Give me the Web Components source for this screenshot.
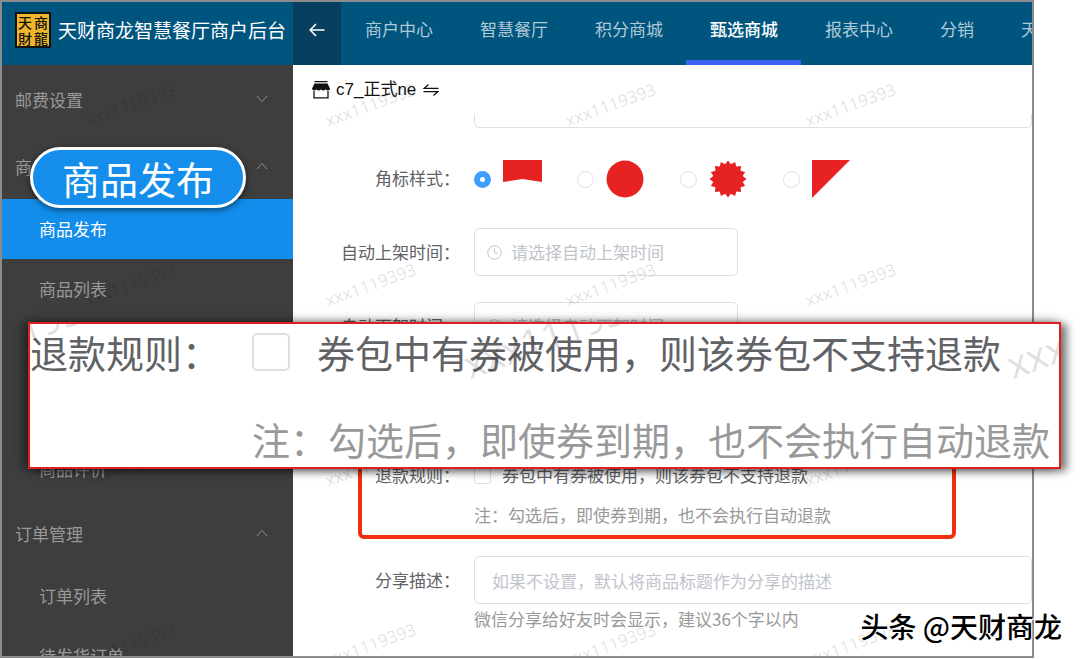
<!DOCTYPE html>
<html lang="zh-CN">
<head>
<meta charset="utf-8">
<title>天财商龙智慧餐厅商户后台</title>
<style>
    * { box-sizing: border-box; }
    html, body { height: 100%; margin: 0; }
    body {
        position: relative;
        overflow: hidden;
        background: #fff;
        color: #606266;
        font-family: "Noto Sans CJK SC", sans-serif;
        font-size: 17px;
        line-height: 24px;
    }
</style>
</head>
<body>
<app-shell>
    <app-brand slot="header"></app-brand>
    <top-nav slot="header"></top-nav>
    <side-menu slot="side"></side-menu>
    <shop-bar slot="main" name="c7_正式ne"></shop-bar>
    <goods-form slot="main"></goods-form>
    <water-mark slot="overlay" text="xxx1119393" count="16"></water-mark>
</app-shell>
<pill-callout>商品发布</pill-callout>
<rule-callout></rule-callout>
<author-credit>头条 @天财商龙</author-credit>

<script>
// shared helper: open shadow root with own markup
function render(el, html) {
    const root = el.shadowRoot || el.attachShadow({ mode: "open" });
    root.innerHTML = "<style>*{box-sizing:border-box}</style>" + html;
    return root;
}

class AppShell extends HTMLElement {
    connectedCallback() {
        render(this, `
            <style>
                :host {
                    display: flex;
                    flex-direction: column;
                    position: relative;
                    height: calc(100% - 1px);
                    margin-right: 46px;
                    border: 2px solid #8c8c8c;
                    overflow: hidden;
                }
                header { display: flex; flex: none; height: 63px; background: #00557f; }
                .body { display: flex; flex: 1; min-height: 0; }
                aside { flex: none; width: 291px; background: #3e3e3e; overflow: hidden; }
                main { display: flex; flex-direction: column; flex: 1; min-width: 0; }
            </style>
            <header><slot name="header"></slot></header>
            <div class="body">
                <aside><slot name="side"></slot></aside>
                <main><slot name="main"></slot></main>
            </div>
            <slot name="overlay"></slot>
        `);
    }
}
customElements.define("app-shell", AppShell);

class AppBrand extends HTMLElement {
    connectedCallback() {
        render(this, `
            <style>
                :host {
                    display: flex;
                    align-items: center;
                    flex: none;
                    gap: 7px;
                    width: 291px;
                    padding: 0 0 8px 13px;
                    color: #fff;
                    font-size: 19px;
                    white-space: nowrap;
                }
                .logo {
                    display: grid;
                    grid-template-columns: 16px 16px;
                    grid-template-rows: 16px 16px;
                    place-items: center;
                    flex: none;
                    border: 2px solid #111;
                    background: #f0b62c;
                    color: #111;
                    font-size: 14px;
                    font-weight: 500;
                    line-height: 14px;
                }
            </style>
            <div class="logo"><span>天</span><span>商</span><span>財</span><span>龍</span></div>
            <span>天财商龙智慧餐厅商户后台</span>
        `);
    }
}
customElements.define("app-brand", AppBrand);

class TopNav extends HTMLElement {
    connectedCallback() {
        const tabs = ["商户中心", "智慧餐厅", "积分商城", "甄选商城", "报表中心", "分销", "天财"];
        const links = tabs.map(t => `<a href="#"${t === "甄选商城" ? ' class="active"' : ""}>${t}</a>`).join("");
        render(this, `
            <style>
                :host { display: flex; flex: 1; min-width: 0; overflow: hidden; }
                button {
                    display: flex;
                    align-items: center;
                    justify-content: center;
                    flex: none;
                    width: 48px;
                    padding: 0 0 8px;
                    border: 0;
                    background: #073f5e;
                }
                nav { display: flex; }
                a {
                    display: flex;
                    align-items: center;
                    flex: none;
                    padding: 0 23px 4px 24px;
                    border-bottom: 5px solid transparent;
                    color: #b0c9d6;
                    text-decoration: none;
                    white-space: nowrap;
                }
                a.active { border-color: #3b64f2; color: #fff; font-weight: 500; }
            </style>
            <button aria-label="返回">
                <svg width="18" height="16" viewBox="0 0 18 16" fill="none" stroke="#fff" stroke-width="1.600"><path d="M16.500 8H2.500M8 2L2.200 8L8 14"/></svg>
            </button>
            <nav>${links}</nav>
        `);
    }
}
customElements.define("top-nav", TopNav);

class SideMenu extends HTMLElement {
    connectedCallback() {
        const group = (name, open) => `
            <button class="group"><span>${name}</span>
                <svg width="12" height="8" viewBox="0 0 12 8" fill="none" stroke="#8f8f8f"><path d="${open ? "M1 7L6 1.500L11 7" : "M1 1L6 6.500L11 1"}"/></svg>
            </button>`;
        render(this, `
            <style>
                :host { display: flex; flex-direction: column; color: #999; }
                .group {
                    display: flex;
                    align-items: center;
                    justify-content: space-between;
                    flex: none;
                    height: 67px;
                    padding: 0 25px 0 13px;
                    border: 0;
                    background: none;
                    color: inherit;
                    font: inherit;
                }
                .group span { padding-top: 3px; }
                a {
                    display: flex;
                    align-items: center;
                    flex: none;
                    height: 60px;
                    padding-left: 37px;
                    color: inherit;
                    text-decoration: none;
                }
                a.active { background: #128deb; color: #fff; }
                .rest { flex: none; height: 120px; }
            </style>
            ${group("邮费设置", false)}
            ${group("商品管理", true)}
            <a href="#" class="active">商品发布</a>
            <a href="#">商品列表</a>
            <div class="rest"></div>
            <a href="#">商品评价</a>
            ${group("订单管理", true)}
            <a href="#">订单列表</a>
            <a href="#">待发货订单</a>
        `);
    }
}
customElements.define("side-menu", SideMenu);

class ShopBar extends HTMLElement {
    connectedCallback() {
        render(this, `
            <style>
                :host {
                    display: flex;
                    align-items: center;
                    flex: none;
                    gap: 6px;
                    height: 49px;
                    padding-left: 19px;
                    color: #111;
                    font-family: "Liberation Sans", "Noto Sans CJK SC", sans-serif;
                }
                button { display: flex; padding: 0; border: 0; background: none; }
                .swap { padding-left: 1px; }
            </style>
            <svg width="18" height="18" viewBox="0 0 18 18">
                <path fill="#111" d="M2.500 0h13v1.200h-13zM2.500 2.500h13L18 7.500q0 2-1.800 2T13.500 8.200q-.8 1.300-2.300 1.300T9 8.200q-.8 1.300-2.300 1.300T4.500 8.200q-.8 1.300-2.500 1.300T0 7.500z"/>
                <path fill="none" stroke="#111" stroke-width="1.300" d="M2 10v6.800h14V10"/>
            </svg>
            <span>${this.getAttribute("name")}</span>
            <button class="swap" aria-label="切换门店">
                <svg width="16" height="12" viewBox="0 0 16 12" fill="none" stroke="#111" stroke-width="1.300"><path d="M15.500 4.300H1.200L5.500 .600M.500 7.700H14.800L10.500 11.400"/></svg>
            </button>
        `);
    }
}
customElements.define("shop-bar", ShopBar);

class FormRow extends HTMLElement {
    connectedCallback() {
        render(this, `
            <style>
                :host { display: flex; position: relative; }
                .label {
                    flex: none;
                    width: 167px;
                    line-height: 48px;
                    text-align: right;
                    white-space: nowrap;
                }
                .content { flex: 1; min-width: 0; margin-left: 14px; }
            </style>
            <div class="label"><slot name="label"></slot></div>
            <div class="content"><slot></slot></div>
        `);
    }
}
customElements.define("form-row", FormRow);

class GoodsForm extends HTMLElement {
    connectedCallback() {
        // 16 point star badge
        const star = Array.from({ length: 32 }, (_, i) => {
            const r = i % 2 ? 15 : 18.5;
            const a = i * Math.PI / 16;
            return (19 + r * Math.sin(a)).toFixed(1) + "," + (19 - r * Math.cos(a)).toFixed(1);
        }).join(" ");
        const shapes = [
            ["旗帜", '<path d="M0 0H39V22L19.500 19L0 22z"/>'],
            ["圆形", '<circle cx="19" cy="19" r="18.500"/>'],
            ["星形", `<polygon points="${star}"/>`],
            ["三角", '<path d="M0 0H38L0 38z"/>']
        ];
        const radios = shapes.map(([name, svg], i) => `
            <label><input type="radio" name="badge" aria-label="${name}"${i ? "" : " checked"}>
                <svg width="39" height="38" viewBox="0 0 39 38" fill="#e62222">${svg}</svg></label>`).join("");
        const time = (id, ph) => `
            <div class="time">
                <svg width="15" height="15" viewBox="0 0 15 15" fill="none" stroke="#c0c4cc"><circle cx="7.500" cy="7.500" r="6.800"/><path d="M7.500 3.500V8H11"/></svg>
                <input id="${id}" type="text" placeholder="${ph}">
            </div>`;
        render(this, `
            <style>
                :host {
                    display: flex;
                    flex-direction: column;
                    justify-content: flex-start;
                    gap: 26px;
                    flex: 1;
                    min-height: 0;
                    overflow: hidden;
                }
                form-row { flex: none; }
                input, textarea { margin: 0; font: inherit; color: inherit; outline: 0; }
                ::placeholder { color: #c0c4cc; opacity: 1; }
                .tail { height: 14px; overflow: hidden; display: flex; align-items: flex-end; }
                .tail textarea {
                    display: block;
                    flex: 1;
                    height: 96px;
                    border: 1px solid #dcdfe6;
                    border-radius: 5px;
                    resize: none;
                }
                .badges { display: flex; gap: 35px; padding-top: 6px; }
                .badges label { display: flex; align-items: center; gap: 12px; width: 68px; }
                .badges label svg { flex: none; }
                input[type=radio], input[type=checkbox] {
                    appearance: none;
                    flex: none;
                    width: 17px;
                    height: 17px;
                    border: 1px solid #dcdfe6;
                    border-radius: 50%;
                    background: #fff;
                }
                input[type=radio]:checked { border: 6px solid #409eff; }
                input[type=checkbox] { border-radius: 3px; }
                .time {
                    display: flex;
                    align-items: center;
                    gap: 9px;
                    width: 264px;
                    height: 48px;
                    padding-left: 12px;
                    border: 1px solid #dcdfe6;
                    border-radius: 5px;
                }
                .time input { flex: 1; min-width: 0; padding: 0; border: 0; background: none; }
                .hidden-row { flex: none; height: 49px; }
                .check { display: flex; align-items: center; gap: 11px; height: 48px; white-space: nowrap; }
                p { margin: 0; color: #999; white-space: nowrap; }
                .rule p { line-height: 31px; }
                .share input {
                    display: block;
                    width: 100%;
                    height: 48px;
                    padding: 0 17px;
                    border: 1px solid #dcdfe6;
                    border-radius: 5px;
                    background: none;
                }
                .share p { padding-top: 3px; }
                .mark {
                    position: absolute;
                    inset: -16px 76px -9px 65px;
                    border: 4px solid #f0300f;
                    border-radius: 6px;
                    pointer-events: none;
                }
            </style>
            <form-row><div class="tail"><textarea aria-label="商品描述"></textarea></div></form-row>
            <form-row><span slot="label">角标样式：</span><div class="badges">${radios}</div></form-row>
            <form-row><label slot="label" for="up">自动上架时间：</label>${time("up", "请选择自动上架时间")}</form-row>
            <form-row><label slot="label" for="down">自动下架时间：</label>${time("down", "请选择自动下架时间")}</form-row>
            <div class="hidden-row"></div>
            <form-row class="rule">
                <span slot="label">退款规则：</span>
                <label class="check"><input type="checkbox">券包中有券被使用，则该券包不支持退款</label>
                <p>注：勾选后，即使券到期，也不会执行自动退款</p>
                <div class="mark"></div>
            </form-row>
            <form-row class="share">
                <label slot="label" for="share">分享描述：</label>
                <input id="share" type="text" placeholder="如果不设置，默认将商品标题作为分享的描述">
                <p>微信分享给好友时会显示，建议36个字以内</p>
            </form-row>
        `);
    }
}
customElements.define("goods-form", GoodsForm);

class WaterMark extends HTMLElement {
    connectedCallback() {
        const cell = `<span>${this.getAttribute("text")}</span>`;
        render(this, `
            <style>
                :host {
                    display: grid;
                    grid-template-columns: repeat(auto-fill, 240px);
                    grid-auto-rows: 180px;
                    place-items: center;
                    position: absolute;
                    inset: 13px 0 0 9px;
                    overflow: hidden;
                    pointer-events: none;
                    color: rgba(0, 0, 0, .12);
                    font-family: "Noto Sans", sans-serif;
                }
                span { transform: rotate(-20deg); }
            </style>
            ${cell.repeat(Number(this.getAttribute("count")))}
        `);
    }
}
customElements.define("water-mark", WaterMark);

class PillCallout extends HTMLElement {
    connectedCallback() {
        render(this, `
            <style>
                :host {
                    position: absolute;
                    top: 147px;
                    left: 30px;
                    padding: 0 29px;
                    border: 3px solid #fff;
                    border-radius: 31px;
                    background: #158eeb;
                    box-shadow: 0 2px 6px rgba(0, 0, 0, .5);
                    color: #fff;
                    font-size: 38px;
                    line-height: 55px;
                    white-space: nowrap;
                }
            </style>
            <slot></slot>
        `);
    }
}
customElements.define("pill-callout", PillCallout);

class RuleCallout extends HTMLElement {
    connectedCallback() {
        render(this, `
            <style>
                :host {
                    position: absolute;
                    top: 322px;
                    left: 28px;
                    right: 19px;
                    border: 2px solid #dd1f1f;
                    background: #fff;
                    box-shadow: 6px 2px 8px rgba(0, 0, 0, .5), -5px 0 10px rgba(0, 0, 0, .45);
                    font-size: 38px;
                    line-height: 55px;
                    white-space: nowrap;
                    overflow: hidden;
                }
                .grid { display: grid; grid-template-columns: 222px 1fr; row-gap: 32px; padding-bottom: 1px; }
                label { display: flex; align-items: center; gap: 27px; }
                input {
                    appearance: none;
                    flex: none;
                    width: 38px;
                    height: 38px;
                    margin: 0;
                    border: 2px solid #dcdfe6;
                    border-radius: 5px;
                    background: #fff;
                }
                p { grid-column: 2; margin: 0; color: #999; }
                .marks {
                    display: flex;
                    position: absolute;
                    top: -22px;
                    left: -280px;
                    pointer-events: none;
                    color: rgba(0, 0, 0, .12);
                    font-family: "Noto Sans", sans-serif;
                }
                .marks span { flex: none; width: 543px; text-align: center; transform: rotate(-20deg); }
            </style>
            <div class="grid">
                <span>退款规则：</span>
                <label><input type="checkbox">券包中有券被使用，则该券包不支持退款</label>
                <p>注：勾选后，即使券到期，也不会执行自动退款</p>
            </div>
            <div class="marks"><span>xxx1119393</span><span>xxx1119393</span><span>xxx1119393</span></div>
        `);
    }
}
customElements.define("rule-callout", RuleCallout);

class AuthorCredit extends HTMLElement {
    connectedCallback() {
        render(this, `
            <style>
                :host {
                    position: absolute;
                    right: 18px;
                    bottom: 13px;
                    color: #000;
                    font-size: 28px;
                    font-weight: 500;
                    line-height: 40px;
                    white-space: nowrap;
                    text-shadow: -1px -1px 0 #fff, 1px 1px 0 #fff;
                }
            </style>
            <slot></slot>
        `);
    }
}
customElements.define("author-credit", AuthorCredit);
</script>
</body>
</html>
